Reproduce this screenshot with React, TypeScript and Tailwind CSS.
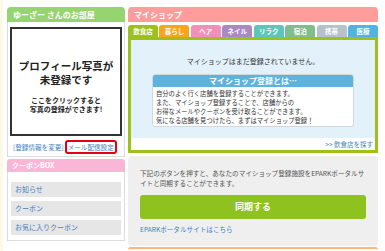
const TABS = [
  { label: "飲食店", color: "bg-[#9cc11b]" },
  { label: "暮らし", color: "bg-[#f7a51e]" },
  { label: "ヘア", color: "bg-[#f08fb7]" },
  { label: "ネイル", color: "bg-[#a98ac3]" },
  { label: "リラク", color: "bg-[#5ec6b8]" },
  { label: "宿泊", color: "bg-[#80bd8e]" },
  { label: "携帯", color: "bg-[#b6c2ca]" },
  { label: "医療", color: "bg-[#4fb5e0]" },
];

const COUPON_LINKS = ["お知らせ", "クーポン", "お気に入りクーポン"];

function ProfilePanel() {
  return (
    <div>
      <div className="h-[15px] rounded-t-[4px] bg-[#95d46e] pl-[6px] text-[8px] leading-[15px] font-bold text-white">
        ゆーざー さんのお部屋
      </div>
      <div className="border border-t-0 border-[#dcdcdc] px-[2px] pt-[5px] pb-[2px]">
        {/* photo placeholder */}
        <div className="flex h-[109px] w-[112px] flex-col items-center justify-center border-2 border-[#333] bg-white text-[#222]">
          <p className="mt-[10px] text-center text-[10.5px] leading-[14px] font-bold">
            プロフィール写真が
            <br />
            未登録です
          </p>
          <p className="mt-[9px] text-center text-[7px] leading-[9px] font-bold">
            ここをクリックすると
            <br />
            写真の登録ができます!
          </p>
        </div>
        <div className="mt-[4px] flex items-center gap-[1px] pl-[3px] text-[6.6px] leading-[10px] text-[#3e7fc1]">
          <span>[登録情報を変更]</span>
          <span className="rounded-[3px] border-2 border-[#e60012] px-[1px]">メール配信設定</span>
        </div>
      </div>
    </div>
  );
}

function CouponPanel() {
  return (
    <div className="mt-[2px]">
      <div className="h-[13px] rounded-t-[3px] bg-[#f9b6d6] pl-[5px] text-[7px] leading-[13px] font-bold text-white">
        クーポンBOX
      </div>
      <div className="flex flex-col gap-[4px] border border-t-0 border-[#dcdcdc] px-[3px] pt-[10px] pb-[5px]">
        {COUPON_LINKS.map((label) => (
          <div key={label} className="h-[15px] bg-[#e6e6e6] pl-[4px] text-[7px] leading-[15px] text-[#3e7fc1]">
            {label}
          </div>
        ))}
      </div>
    </div>
  );
}

function MyShop() {
  return (
    <div>
      <div className="h-[15px] rounded-t-[4px] bg-[#ff9c9c] pl-[6px] text-[8px] leading-[15px] font-bold text-white">
        マイショップ
      </div>
      <div className="mt-[3px] flex gap-[1.5px]">
        {TABS.map((tab) => (
          <div
            key={tab.label}
            className={`${tab.color} h-[12px] flex-1 rounded-t-[3px] text-center text-[6.5px] leading-[12px] font-bold text-white`}
          >
            {tab.label}
          </div>
        ))}
      </div>
      <div className="border-[3px] border-[#9cc11b] bg-white">
        <div className="bg-[#e3f2fa] px-[21px] pt-[16px] pb-[11px]">
          <p className="text-center text-[7px] leading-[10px] text-[#333]">マイショップはまだ登録されていません。</p>
          <div className="mt-[8px] overflow-hidden rounded-[3px] border border-[#cfd8dd] bg-white">
            <div className="h-[12px] bg-[#5cb3dd] text-center text-[8px] leading-[12px] font-bold text-white">
              マイショップ登録とは…
            </div>
            <p className="px-[3px] pt-[2px] pb-[1px] text-[6.3px] leading-[9px] text-[#333]">
              自分のよく行く店舗を登録することができます。
              <br />
              また、マイショップ登録することで、店舗からの
              <br />
              お得なメールやクーポンを受け取ることができます。
              <br />
              気になる店舗を見つけたら、まずはマイショップ登録！
            </p>
          </div>
        </div>
        <div className="h-[12px] pr-[2px] text-right text-[6.5px] leading-[12px] text-[#3e7fc1]">&gt;&gt; 飲食店を探す</div>
      </div>
    </div>
  );
}

function SyncBox() {
  return (
    <div className="mt-[3px] rounded-[4px] bg-[#efefef] px-[12px] pt-[12px] pb-[12px]">
      <p className="text-[6.6px] leading-[10px] text-[#555]">
        下記のボタンを押すと、あなたのマイショップ登録施設をEPARKポータルサ
        <br />
        イトと同期することができます。
      </p>
      <button className="mt-[7px] h-[24px] w-full rounded-[3px] bg-[#8dc21f] text-[9px] font-bold text-white">
        同期する
      </button>
      <p className="mt-[5px] text-[6.6px] leading-[10px] text-[#3e7fc1]">EPARKポータルサイトはこちら</p>
    </div>
  );
}

export default function App() {
  return (
    <div
      className="h-[251px] w-[385px] overflow-hidden bg-[#fcfae6]"
      style={{ fontFamily: '"Noto Sans CJK JP", "Noto Sans", sans-serif' }}
    >
      <div className="ml-[3px] flex h-full gap-[3px] bg-white pt-[7px] pl-[4px]">
        <div className="w-[118px] shrink-0">
          <ProfilePanel />
          <CouponPanel />
        </div>
        <div className="w-[250px] shrink-0">
          <MyShop />
          <SyncBox />
          <div className="mt-[1px] h-[4px] rounded-t-[3px] border-t-2 border-[#ffb67a]" />
        </div>
      </div>
    </div>
  );
}
